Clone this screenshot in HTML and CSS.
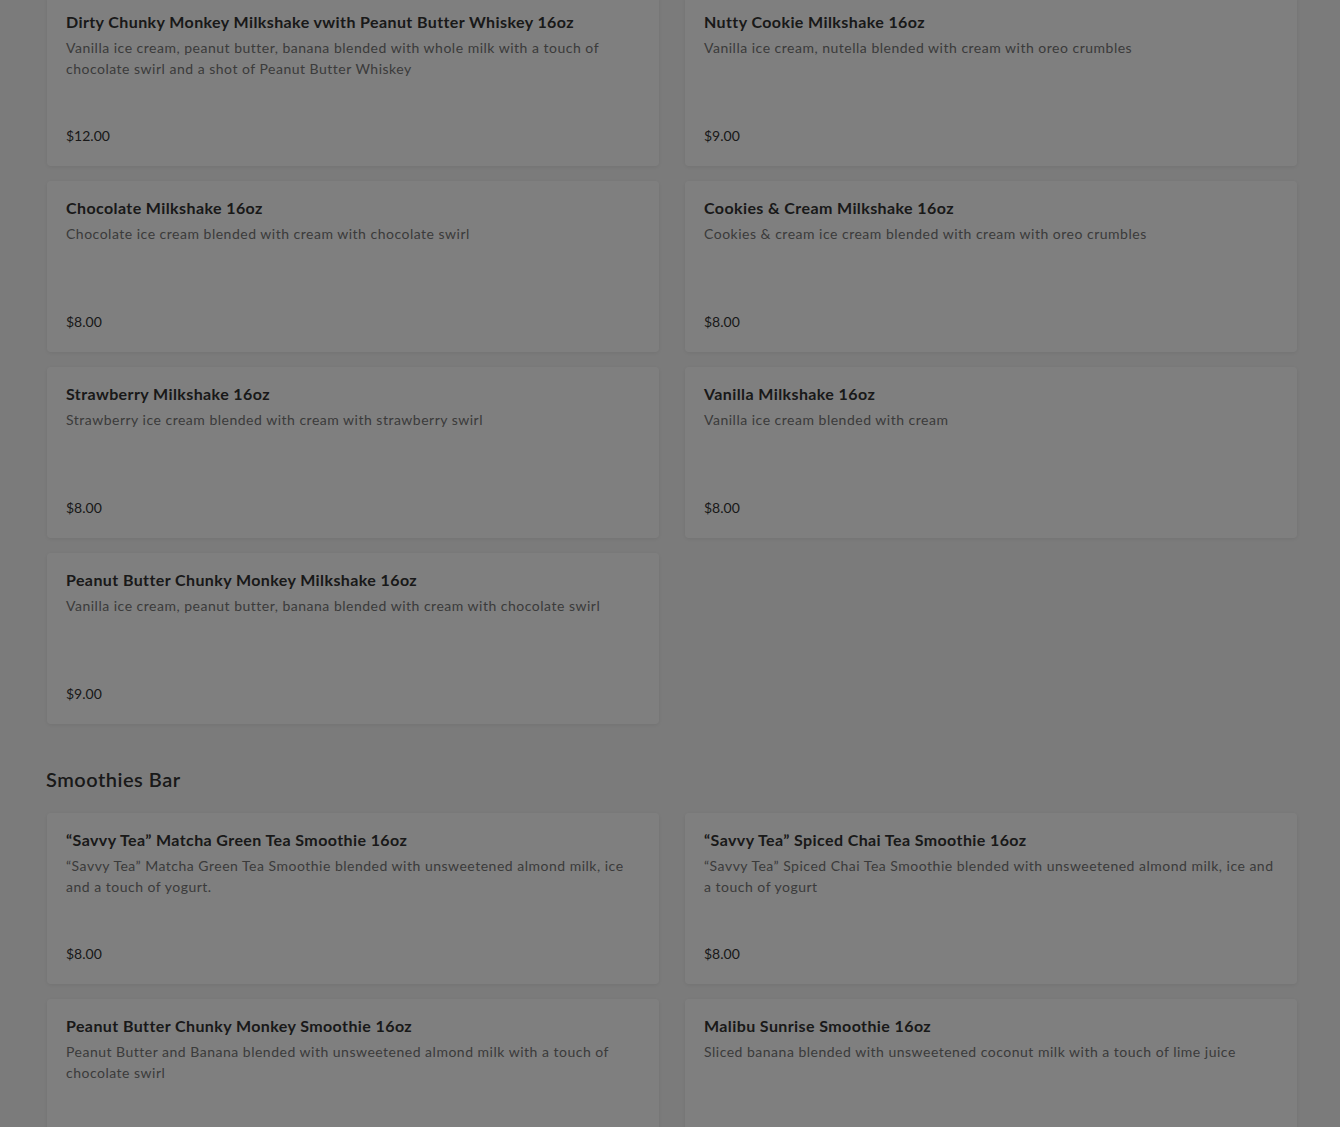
FILE: index.html
```html
<!DOCTYPE html>
<html lang="en">
<head>
  <meta charset="UTF-8">
  <title>Menu</title>
  <link rel="stylesheet" href="styles.css">
</head>
<body>

  <div class="menu">

    <!-- Milkshakes (scrolled) -->
    <div class="item-grid first-grid">
      <div class="item-card">
        <h3>Dirty Chunky Monkey Milkshake vwith Peanut Butter Whiskey 16oz</h3>
        <p class="desc">Vanilla ice cream, peanut butter, banana blended with whole milk with a touch of chocolate swirl and a shot of Peanut Butter Whiskey</p>
        <div class="price">$12.00</div>
      </div>
      <div class="item-card">
        <h3>Nutty Cookie Milkshake 16oz</h3>
        <p class="desc">Vanilla ice cream, nutella blended with cream with oreo crumbles</p>
        <div class="price">$9.00</div>
      </div>
      <div class="item-card">
        <h3>Chocolate Milkshake 16oz</h3>
        <p class="desc">Chocolate ice cream blended with cream with chocolate swirl</p>
        <div class="price">$8.00</div>
      </div>
      <div class="item-card">
        <h3>Cookies &amp; Cream Milkshake 16oz</h3>
        <p class="desc">Cookies &amp; cream ice cream blended with cream with oreo crumbles</p>
        <div class="price">$8.00</div>
      </div>
      <div class="item-card">
        <h3>Strawberry Milkshake 16oz</h3>
        <p class="desc">Strawberry ice cream blended with cream with strawberry swirl</p>
        <div class="price">$8.00</div>
      </div>
      <div class="item-card">
        <h3>Vanilla Milkshake 16oz</h3>
        <p class="desc">Vanilla ice cream blended with cream</p>
        <div class="price">$8.00</div>
      </div>
      <div class="item-card">
        <h3>Peanut Butter Chunky Monkey Milkshake 16oz</h3>
        <p class="desc">Vanilla ice cream, peanut butter, banana blended with cream with chocolate swirl</p>
        <div class="price">$9.00</div>
      </div>
    </div>

    <!-- Smoothies -->
    <h2 class="section-title">Smoothies Bar</h2>
    <div class="item-grid">
      <div class="item-card">
        <h3>“Savvy Tea” Matcha Green Tea Smoothie 16oz</h3>
        <p class="desc">“Savvy Tea” Matcha Green Tea Smoothie blended with unsweetened almond milk, ice and a touch of yogurt.</p>
        <div class="price">$8.00</div>
      </div>
      <div class="item-card">
        <h3>“Savvy Tea” Spiced Chai Tea Smoothie 16oz</h3>
        <p class="desc">“Savvy Tea” Spiced Chai Tea Smoothie blended with unsweetened almond milk, ice and a touch of yogurt</p>
        <div class="price">$8.00</div>
      </div>
      <div class="item-card">
        <h3>Peanut Butter Chunky Monkey Smoothie 16oz</h3>
        <p class="desc">Peanut Butter and Banana blended with unsweetened almond milk with a touch of chocolate swirl</p>
        <div class="price">$9.00</div>
      </div>
      <div class="item-card">
        <h3>Malibu Sunrise Smoothie 16oz</h3>
        <p class="desc">Sliced banana blended with unsweetened coconut milk with a touch of lime juice</p>
        <div class="price">$9.00</div>
      </div>
    </div>

  </div>

  <!-- modal backdrop dimming the page -->
  <div class="backdrop"></div>

</body>
</html>
```

FILE: styles.css
```css
* {
  box-sizing: border-box;
}

html, body {
  height: 100%;
  overflow: hidden;
}

body {
  margin: 0;
  font-family: 'Lato', 'Liberation Sans', sans-serif;
  background: #f7f7f7;
  color: #333;
}

.menu {
  width: 1250px;
  margin-left: 47px;
}

.item-grid {
  display: grid;
  grid-template-columns: 1fr 1fr;
  column-gap: 26px;
  row-gap: 15px;
}

.first-grid {
  margin-top: -5px;
}

.item-card {
  background: #fff;
  border-radius: 4px;
  box-shadow: 0 1px 4px rgba(0, 0, 0, 0.08);
  height: 171px;
  padding: 16px 19px 20px;
  display: flex;
  flex-direction: column;
}

.item-card h3 {
  margin: 0;
  font-size: 16px;
  line-height: 22px;
  font-weight: 700;
  letter-spacing: 0.4px;
  color: #333;
}

.desc {
  margin: 4px 0 0;
  font-size: 14px;
  line-height: 21px;
  letter-spacing: 0.5px;
  color: #767676;
}

.price {
  margin-top: auto;
  font-size: 14px;
  line-height: 20px;
  color: #333;
}

.section-title {
  margin: 42px 0 21px -1px;
  font-size: 20px;
  line-height: 26px;
  font-weight: 600;
  letter-spacing: 0.5px;
  color: #333;
}

.backdrop {
  position: fixed;
  inset: 0;
  background: rgba(0, 0, 0, 0.5);
}
```
